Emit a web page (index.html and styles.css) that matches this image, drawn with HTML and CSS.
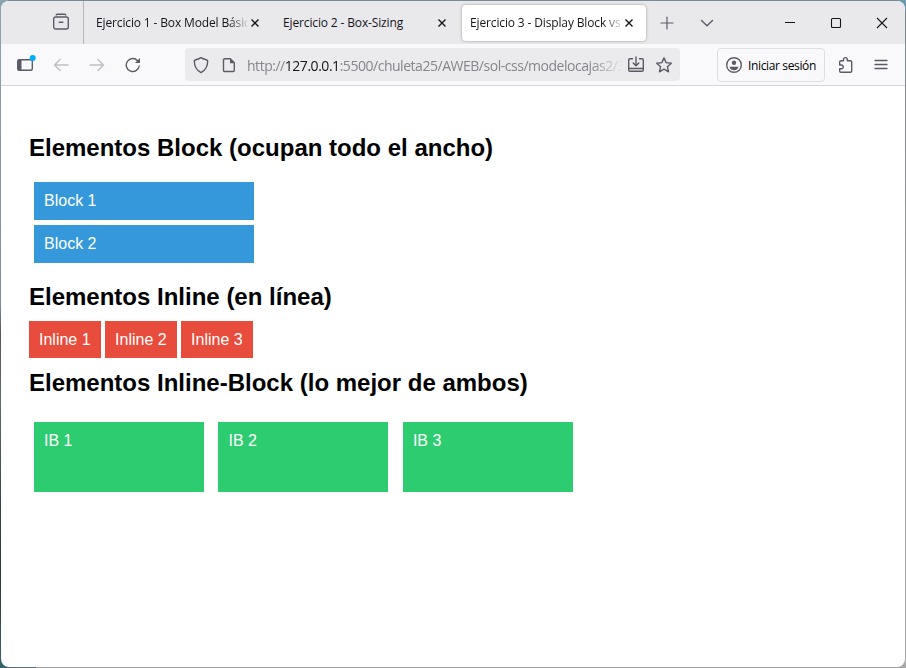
FILE: index.html
```html
<!DOCTYPE html>
<html lang="es">
<head>
<meta charset="utf-8">
<title>Ejercicio 3 - Display Block vs</title>
<link rel="stylesheet" href="styles.css">
</head>
<body>
<div class="window">
  <header class="tabbar">
    <div class="tabbar-start">
      <svg class="icon" width="18" height="18" viewBox="0 0 18 18"><path d="M4.2 1.9Q4.6 1.2 5.5 1.2h7Q13.400 1.200 13.800 1.900"/><rect x="1.700" y="4" width="14.600" height="12" rx="2"/><path d="M7.200 9.300h3.600"/></svg>
    </div>
    <div class="tab"><span class="tab-title fade">Ejercicio 1 - Box Model Básic</span><svg class="close" width="10" height="10" viewBox="0 0 10 10"><path d="M1.500 1.500l7 7M8.500 1.500l-7 7"/></svg></div>
    <div class="tab"><span class="tab-title">Ejercicio 2 - Box-Sizing</span><svg class="close" width="10" height="10" viewBox="0 0 10 10"><path d="M1.500 1.500l7 7M8.500 1.500l-7 7"/></svg></div>
    <div class="tab active"><span class="tab-title fade">Ejercicio 3 - Display Block vs</span><svg class="close" width="10" height="10" viewBox="0 0 10 10"><path d="M1.500 1.500l7 7M8.500 1.500l-7 7"/></svg></div>
    <svg class="icon new-tab" width="14" height="14" viewBox="0 0 14 14"><path d="M7 1v12M1 7h12"/></svg>
    <svg class="icon tab-list" width="14" height="14" viewBox="0 0 14 14"><path d="M1.500 4.500L7 9.800l5.500-5.300"/></svg>
    <div class="controls">
      <svg width="12" height="12" viewBox="0 0 12 12"><path d="M1 5.500h10"/></svg>
      <svg width="12" height="12" viewBox="0 0 12 12"><rect x="1.500" y="1.500" width="9" height="9" rx="1"/></svg>
      <svg width="12" height="12" viewBox="0 0 12 12"><path d="M1 1l10 10M11 1L1 11"/></svg>
    </div>
  </header>
  <nav class="toolbar">
    <svg class="icon sidebar" width="20" height="18" viewBox="0 0 20 18"><rect x="1.700" y="4.700" width="14.600" height="10.600" rx="1.500"/><path class="solid" d="M2 4.500h3.500v11H2z"/><circle class="dot" cx="16.700" cy="3" r="3"/></svg>
    <svg class="icon dim back" width="16" height="16" viewBox="0 0 16 16"><path d="M15 8H1.500M7 2.500L1.500 8 7 13.500"/></svg>
    <svg class="icon dim forward" width="16" height="16" viewBox="0 0 16 16"><path d="M1 8h13.500M9 2.500L14.500 8 9 13.500"/></svg>
    <svg class="icon reload" width="16" height="16" viewBox="0 0 16 16"><path d="M14.200 9a6.500 6.500 0 1 1-1.600-5.300"/><path class="solid" d="M15 1v5H10z"/></svg>
    <div class="urlbar">
      <svg class="icon" width="16" height="18" viewBox="0 0 16 18"><path d="M8 1.600c2 1.300 3.600 1.900 5.800 2.400.6.200.9.500.9 1.100-.1 5.400-2.100 9.300-6.700 11.500C3.400 14.400 1.400 10.500 1.300 5.100c0-.6.300-.9.900-1.100C4.400 3.500 6 2.900 8 1.600z"/></svg>
      <svg class="icon page" width="14" height="16" viewBox="0 0 14 16"><path d="M2.700 1.700h5.600l4 4v7.600q0 1.200-1.200 1.200H2.700q-1.200 0-1.200-1.200V2.900q0-1.200 1.200-1.200z"/><path class="solid" d="M8 1.700v4.600h4.600z"/></svg>
      <span class="url">http://<b>127.0.0.1</b>:5500/chuleta25/AWEB/sol-css/modelocajas2/3</span>
      <svg class="icon install" width="18" height="18" viewBox="0 0 18 18"><path d="M5.500 2.700H3q-1.300 0-1.300 1.300v10q0 1.300 1.300 1.300h12q1.300 0 1.300-1.300V4q0-1.300-1.300-1.300h-2.500M2 12.500h14M9 1v8.500M6.200 7L9 9.800l2.800-2.800"/></svg>
      <svg class="icon" width="18" height="18" viewBox="0 0 18 18"><path d="M9 1.900l2.100 4.700 5.200.6-3.900 3.500 1.100 5.100L9 13.200l-4.500 2.600 1.100-5.100-3.900-3.500 5.200-.6z"/></svg>
    </div>
    <div class="signin">
      <svg class="icon" width="18" height="18" viewBox="0 0 18 18"><circle cx="9" cy="9" r="7.300"/><circle class="solid" cx="9" cy="6.800" r="2.200"/><path class="solid" d="M4.500 10.700h9q-1 3.600-4.500 3.600t-4.500-3.600z"/></svg>
      <span class="signin-label">Iniciar sesión</span>
    </div>
    <svg class="icon puzzle" width="16" height="18" viewBox="0 0 16 18"><path d="M5.500 4.700V3.500a1.900 1.900 0 0 1 3.800 0v1.200h3.200q1.200 0 1.200 1.200v9.200q0 1.200-1.200 1.200H2.900q-1.200 0-1.200-1.200v-2.300h1.600a1.900 1.900 0 0 0 0-3.800H1.700V5.900q0-1.200 1.200-1.200z"/></svg>
    <svg class="icon menu" width="14" height="12" viewBox="0 0 14 12"><path d="M1 1.500h12M1 5.500h12M1 9.500h12"/></svg>
  </nav>
  <main class="page-content">
    <h2>Elementos Block (ocupan todo el ancho)</h2>
    <div class="block">Block 1</div>
    <div class="block">Block 2</div>
    <h2>Elementos Inline (en línea)</h2>
    <span class="inline">Inline 1</span>
    <span class="inline">Inline 2</span>
    <span class="inline">Inline 3</span>
    <h2>Elementos Inline-Block (lo mejor de ambos)</h2>
    <div class="inline-block">IB 1</div>
    <div class="inline-block">IB 2</div>
    <div class="inline-block">IB 3</div>
  </main>
</div>
</body>
</html>
```
FILE: styles.css
```css
* { box-sizing: border-box; }
html, body { margin: 0; height: 100%; overflow: hidden; }
body {
  padding: 1px;
  background:
    linear-gradient(#8ca4b0, #7e939c 45%, #5d5458 50%, #626b70 60%, #34494f 75%, #313734 86%, #35545c 95%, #35636b) left / 8px 100% no-repeat,
    linear-gradient(#6d98ad, #6d98ad 10px, #7c878e 12px, #858b90 25%, #a9a9a9 50%, #a9a9a9) right / 8px 100% no-repeat,
    linear-gradient(90deg, #54717a 36px, #a0a0a0 36px) bottom / 100% 8px no-repeat,
    #758b97;
  font-family: "Open Sans", "Noto Sans", sans-serif;
  font-size: 12px;
  color: #15141a;
}
svg { flex: none; display: block; fill: none; stroke: currentColor; }
.window { height: 666px; border-radius: 8px; overflow: hidden; background: #fff; }
.icon { color: #5b5b66; stroke-width: 1.4; stroke-linejoin: round; stroke-linecap: round; }
.solid { fill: currentColor; stroke: none; }
.dot { fill: #00adff; stroke: none; }
.dim { color: #bebec3; }

.tabbar { display: flex; align-items: center; height: 43px; background: #e9e9eb; }
.tabbar-start { width: 83px; height: 43px; padding: 12px 0 0 51px; border-right: 1px solid #b5b5ba; }
.tab { display: flex; align-items: center; width: 187px; height: 36px; padding-left: 12px; }
.tab-title { width: 151px; height: 18px; line-height: 18px; overflow: hidden; white-space: nowrap; letter-spacing: -0.14px; }
.fade { mask-image: linear-gradient(90deg, #000 calc(100% - 18px), transparent calc(100% + 3px)); }
.close { width: 10px; margin-left: 3px; stroke-width: 1.4; }
.active { width: 184px; margin-left: 4px; padding-left: 8px; background: #fff; border-radius: 4px; box-shadow: 0 0 3px rgba(0, 0, 0, .35); }
.new-tab { margin-left: 14px; stroke-width: 1.2; }
.tab-list { margin-left: 26px; stroke-width: 1.4; }
.controls { display: flex; gap: 34px; margin-left: 70px; color: #15141a; stroke-width: 1.100; }

.toolbar { display: flex; align-items: center; height: 42px; padding-left: 15px; background: #f9f9fb; border-bottom: 1px solid #d5d5d9; }
.sidebar { margin-top: -1px; }
.back { margin-left: 17px; }
.forward { margin-left: 20px; }
.reload { margin-left: 20px; }
.urlbar { display: flex; align-items: center; width: 495px; height: 33px; margin-left: 44px; padding-left: 8px; background: #ebebed; border-radius: 4px; }
.page { margin-left: 13px; }
.url { width: 376px; height: 20px; margin: 2px 4px 0 11px; line-height: 20px; font-size: 14px; letter-spacing: -0.47px; color: #85858c; white-space: nowrap; overflow: hidden; mask-image: linear-gradient(90deg, #000 calc(100% - 32px), transparent); }
.url b { font-weight: 400; color: #15141a; }
.install { margin-right: 10px; }
.signin { display: flex; align-items: center; gap: 5px; width: 108px; height: 34px; margin-left: 37px; padding-left: 7px; border: 1px solid #dedee2; border-radius: 4px; white-space: nowrap; letter-spacing: -0.36px; color: #000; }
.signin-label { padding-top: 2px; }
.puzzle { margin-left: 13px; }
.menu { margin-left: 20px; stroke-width: 1.300; }

.page-content { padding: 28px; font: 16px/18px "Liberation Sans", Arial, sans-serif; color: #fff; display: flow-root; }
h2 { margin: 20px 0; font-size: 24px; line-height: 28px; color: #000; }
.block { width: 220px; margin: 5px; padding: 10px; background: #3498db; }
.inline { padding: 10px; background: #e74c3c; }
.inline-block { display: inline-block; width: 170px; height: 70px; margin: 5px; padding: 10px; background: #2ecc71; }
```
